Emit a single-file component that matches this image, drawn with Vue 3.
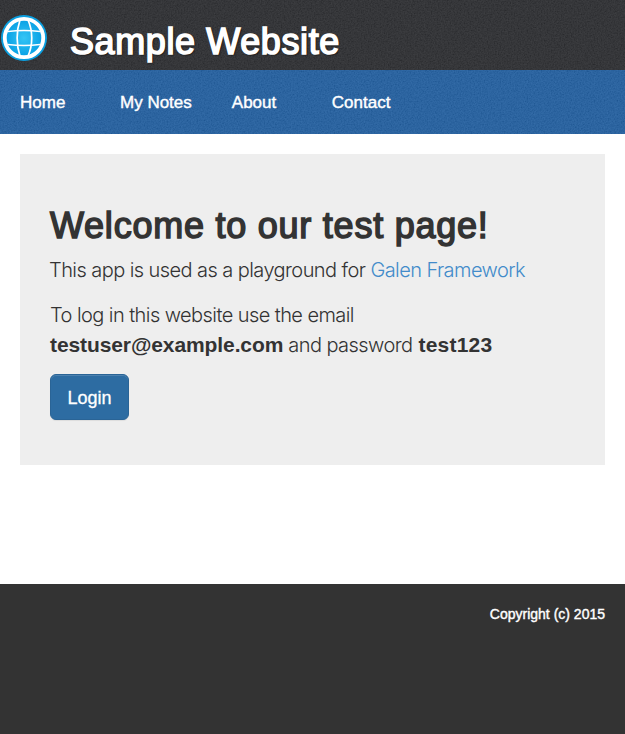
<script setup>
const links = ['Home', 'My Notes', 'About', 'Contact']
</script>

<template>
  <div class="page">
    <header class="header">
      <svg class="noise" aria-hidden="true">
        <filter id="grain-dark" x="0" y="0" width="100%" height="100%">
          <feTurbulence type="fractalNoise" baseFrequency="0.7" numOctaves="2" seed="4" />
          <feColorMatrix values="0.16 0 0 0 0.092  0.16 0 0 0 0.096  0.16 0 0 0 0.108  0 0 0 0 1" color-interpolation-filters="sRGB" />
        </filter>
        <rect width="100%" height="100%" filter="url(#grain-dark)" />
      </svg>
      <svg class="logo" viewBox="0 0 48 48">
        <defs>
          <radialGradient id="globe">
            <stop offset="0" stop-color="#35c5f5" />
            <stop offset="1" stop-color="#069fe4" />
          </radialGradient>
        </defs>
        <circle cx="24" cy="24" r="23" fill="#0b9fe0" />
        <circle cx="24" cy="24" r="19.2" fill="url(#globe)" stroke="#fff" stroke-width="3.8" />
        <g fill="none" stroke="#fff" stroke-width="1.7">
          <path d="M20 6C16.2 17 16.2 31 20 42M28 6C33 17 33 31 28 42" />
          <path d="M8 17.5Q24 15.5 40 17.5M8 30.5Q24 32.5 40 30.5" />
        </g>
      </svg>
      <h1>Sample Website</h1>
    </header>
    <nav class="nav">
      <svg class="noise" aria-hidden="true">
        <filter id="grain-blue" x="0" y="0" width="100%" height="100%">
          <feTurbulence type="fractalNoise" baseFrequency="0.7" numOctaves="2" seed="9" />
          <feColorMatrix values="0.16 0 0 0 0.055  0.16 0 0 0 0.275  0.16 0 0 0 0.510  0 0 0 0 1" color-interpolation-filters="sRGB" />
        </filter>
        <rect width="100%" height="100%" filter="url(#grain-blue)" />
      </svg>
      <a v-for="link in links" :key="link">{{ link }}</a>
    </nav>
    <main class="content">
      <section class="panel">
        <h2>Welcome to our test page!</h2>
        <p class="intro">This app is used as a playground for <a>Galen Framework</a></p>
        <p class="hint">To log in this website use the email<br /><b>testuser@example.com</b> and password <b class="secret">test123</b></p>
        <button class="login">Login</button>
      </section>
    </main>
    <footer class="footer">Copyright (c) 2015</footer>
  </div>
</template>

<style>
body {
  background: #fff;
}
</style>

<style scoped>
.page {
  display: flex;
  flex-direction: column;
  height: 734px;
  color: #333;
  font-family: "Liberation Sans", Arial, sans-serif;
}
.noise {
  position: absolute;
  inset: 0;
  width: 100%;
  height: 100%;
}
.header {
  position: relative;
  display: flex;
  height: 70px;
  box-sizing: border-box;
  padding-top: 14px;
  background: #303136;
}
.logo {
  position: relative;
  width: 48px;
  height: 48px;
}
h1 {
  position: relative;
  margin: 8px 0 0 22px;
  color: #fff;
  font-size: 36px;
  font-weight: 400;
  line-height: 40px;
  letter-spacing: 0.6px;
  white-space: nowrap;
  text-shadow: 1px 1px 2px #000;
  -webkit-text-stroke: 1.6px #fff;
}
.nav {
  position: relative;
  display: flex;
  gap: 40px;
  height: 64px;
  box-sizing: border-box;
  padding: 23px 20px 21px;
  background: #28609f;
}
.nav a {
  position: relative;
  min-width: 60px;
  color: #fff;
  font-size: 17px;
  line-height: 20px;
  white-space: nowrap;
  -webkit-text-stroke: 0.4px #fff;
}
.content {
  height: 430px;
  padding: 20px 20px 0;
}
.panel {
  height: 311px;
  box-sizing: border-box;
  padding: 52px 30px 0;
  background: #eee;
}
h2 {
  margin: 0 0 9px;
  font-size: 36px;
  font-weight: 400;
  line-height: 40px;
  letter-spacing: 0.76px;
  white-space: nowrap;
  -webkit-text-stroke: 1.5px #333;
}
p {
  margin: 0 0 15px;
  font-family: Inter, sans-serif;
  font-size: 20px;
  font-weight: 300;
  line-height: 30px;
  letter-spacing: -0.57px;
  white-space: nowrap;
}
.intro {
  margin-left: -1px;
}
p a {
  color: #428bca;
}
p b {
  font-family: "Liberation Sans", Arial, sans-serif;
  font-size: 21px;
  font-weight: 700;
  letter-spacing: -0.1px;
}
.secret {
  margin-left: 1px;
  letter-spacing: 0.2px;
}
.hint {
  margin-bottom: 14px;
}
.login {
  display: block;
  width: 79px;
  height: 46px;
  padding: 2px 0 0;
  border: 1px solid #2a6496;
  border-radius: 6px;
  background: #2d6ca2;
  box-shadow: inset 0 1px 0 rgba(255, 255, 255, 0.15), 0 1px 1px rgba(0, 0, 0, 0.075);
  color: #fff;
  font-family: inherit;
  font-size: 18px;
  -webkit-text-stroke: 0.3px #fff;
}
.footer {
  flex: 1;
  padding: 20px 20px 0;
  background: #333;
  color: #fff;
  font-size: 14px;
  line-height: 20px;
  text-align: right;
  -webkit-text-stroke: 0.4px #fff;
}
</style>
